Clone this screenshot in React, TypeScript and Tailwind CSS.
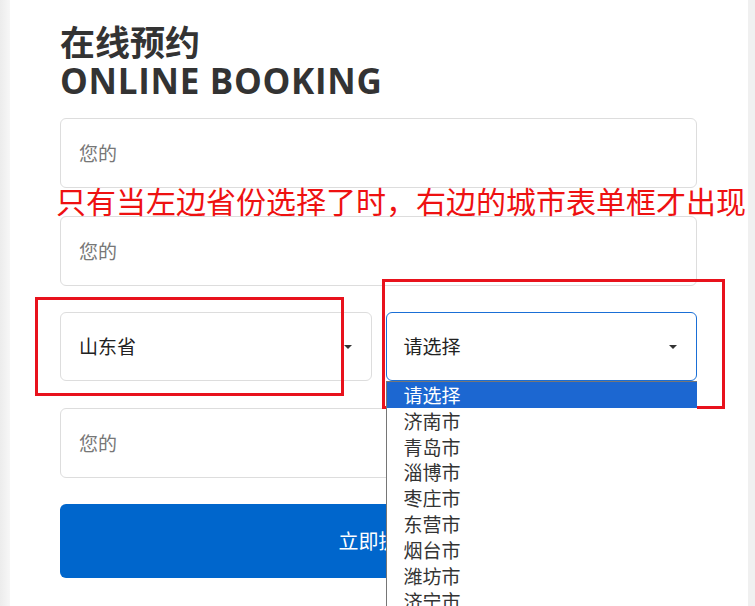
import React from 'react';

const cities = ['济南市', '青岛市', '淄博市', '枣庄市', '东营市', '烟台市', '潍坊市', '济宁市', '泰安市'];

const cjk = { fontFamily: '"Noto Sans CJK SC", "Noto Sans", sans-serif' };

const Arrow = () => (
  <svg width="8" height="4" viewBox="0 0 8 4" className="shrink-0">
    <path d="M0 0 L8 0 L4 4 Z" fill="#333" />
  </svg>
);

const TextInput = ({ className = '' }: { className?: string }) => (
  <div
    className={`h-[70px] rounded-[6px] border border-[#dddddd] flex items-center px-[18px] text-[19px] text-[#777] ${className}`}
  >
    您的
  </div>
);

export default function App() {
  return (
    <div className="relative h-[606px] overflow-hidden flex bg-[#f0f0f0]" style={cjk}>
      <div className="w-[10px] bg-gradient-to-r from-[#ececec] to-[#f7f7f7]" />
      <div className="w-[738px] bg-white pl-[50px] pr-[51px] pt-[21px]">
        <h2 className="text-[35px] font-bold leading-[40px] text-[#333]">在线预约</h2>
        <h2
          className="text-[35px] font-bold leading-[40px] text-[#333] tracking-[0.7px]"
          style={{ fontFamily: '"Open Sans", sans-serif' }}
        >
          ONLINE BOOKING
        </h2>

        <TextInput className="mt-[17px]" />
        <TextInput className="mt-[28px]" />

        <div className="mt-[26px] grid grid-cols-2 gap-[14px]">
          <div className="h-[69px] rounded-[6px] border border-[#dddddd] flex items-center justify-between pl-[18px] pr-[19px] text-[19px] text-[#222]">
            <span>山东省</span>
            <Arrow />
          </div>
          <div className="relative">
            <div className="h-[69px] rounded-[6px] border border-[#1a6fd6] flex items-center justify-between pl-[17px] pr-[19px] text-[19px] text-[#222]">
              <span>请选择</span>
              <Arrow />
            </div>
            <ul className="absolute left-0 top-[69px] w-full bg-white border-l border-t border-[#767676] z-10 text-[19px] text-[#333] leading-[25.8px]">
              <li className="bg-[#1c67d1] text-white pl-[17px]">请选择</li>
              {cities.map((c) => (
                <li key={c} className="pl-[17px]">
                  {c}
                </li>
              ))}
            </ul>
          </div>
        </div>

        <TextInput className="mt-[27px]" />

        <button className="mt-[26px] w-full h-[74px] rounded-[6px] bg-[#0066cc] text-white text-[20px]">
          立即提交
        </button>
      </div>

      {/* annotation */}
      <p className="absolute left-[56px] top-[181px] text-[30px] leading-[38px] text-[#ee1111] whitespace-nowrap">
        只有当左边省份选择了时，右边的城市表单框才出现
      </p>
      <div className="absolute left-[35px] top-[297px] w-[309px] h-[99px] border-[3px] border-[#e8121c]" />
      <div className="absolute left-[382px] top-[279px] w-[343px] h-[130px] border-[3px] border-[#e8121c]" />
    </div>
  );
}
